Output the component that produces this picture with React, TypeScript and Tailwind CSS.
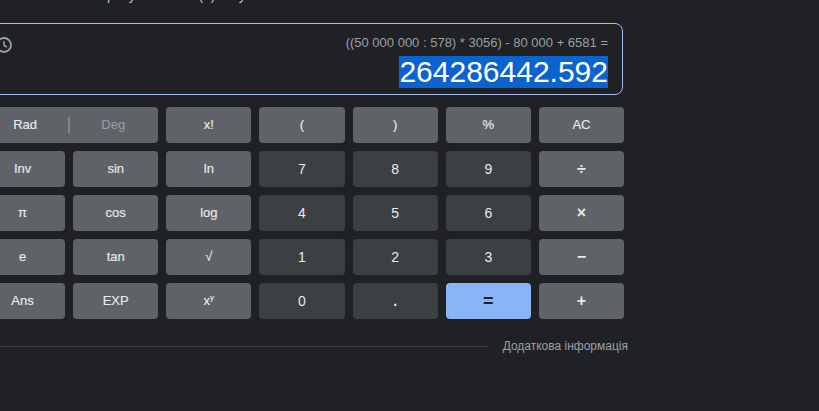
const sans = "font-['Liberation_Sans',Arial,sans-serif]";

type Key = { label: React.ReactNode; kind?: "fn" | "num" | "eq" | "op" };

const rows: Key[][] = [
  [
    { label: "x!" },
    { label: "(" },
    { label: ")" },
    { label: "%" },
    { label: "AC" },
  ],
  [
    { label: "Inv" },
    { label: "sin" },
    { label: "ln" },
    { label: "7", kind: "num" },
    { label: "8", kind: "num" },
    { label: "9", kind: "num" },
    { label: "÷", kind: "op" },
  ],
  [
    { label: "π" },
    { label: "cos" },
    { label: "log" },
    { label: "4", kind: "num" },
    { label: "5", kind: "num" },
    { label: "6", kind: "num" },
    { label: "×", kind: "op" },
  ],
  [
    { label: "e" },
    { label: "tan" },
    { label: "√" },
    { label: "1", kind: "num" },
    { label: "2", kind: "num" },
    { label: "3", kind: "num" },
    { label: "−", kind: "op" },
  ],
  [
    { label: "Ans" },
    { label: "EXP" },
    {
      label: (
        <>
          x<sup className="top-[-5px] text-[8px]">y</sup>
        </>
      ),
    },
    { label: "0", kind: "num" },
    { label: ".", kind: "num" },
    { label: "=", kind: "eq" },
    { label: "+", kind: "op" },
  ],
];

function CalcKey({ k }: { k: Key }) {
  let tone = "bg-[#5f6368] pb-px text-[13px] text-[#e8eaed] [-webkit-text-stroke:0.15px_#e8eaed]";
  if (k.kind === "num") tone = "bg-[#3c4043] text-sm text-[#e8eaed]";
  if (k.kind === "op") tone = "bg-[#5f6368] text-base font-bold text-[#e8eaed]";
  if (k.kind === "eq") tone = "bg-[#8ab4f8] text-lg font-bold text-[#202124]";
  return (
    <div className={`flex h-9 items-center justify-center rounded ${tone} ${k.label === "." ? "font-bold" : ""}`}>
      <span>{k.label}</span>
    </div>
  );
}

function HistoryIcon() {
  return (
    <svg width="24" height="24" viewBox="0 0 24 24" fill="none" stroke="#9aa0a6" strokeWidth="1.8" className="shrink-0">
      <circle cx="12" cy="12" r="7" />
      <path d="M12 8v4.5l3 1.5" strokeWidth="1.5" />
    </svg>
  );
}

export default function App() {
  return (
    <div className={`h-[411px] w-[819px] overflow-hidden bg-[#202124] ${sans}`}>
      <div className="ml-[-20px] w-[644px]">
        <p className="mt-[-13px] h-3.5 pl-[127px] text-sm leading-[16px] whitespace-nowrap text-[#bdc1c6]">
          року та назва (а) на у
        </p>
        <div className="mt-[22px] mr-px flex h-[72px] justify-between rounded-lg border border-[#a8c0ec] pt-[10px] pr-[14px] pl-[11px]">
          <div className="-mt-[1px]">
            <HistoryIcon />
          </div>
          <div className="flex flex-col items-end">
            <span className="text-[13px] leading-[18px] text-[#9aa0a6]">
              ((50 000 000 : 578) * 3056) - 80 000 + 6581 =
            </span>
            <span className="mt-[4px] bg-[#0b63ce] text-[30px] leading-[32px] text-white">264286442.592</span>
          </div>
        </div>
        <div className="mt-3 grid grid-cols-7 gap-2">
          <div className="col-span-2 flex h-9 items-center rounded bg-[#5f6368] pb-px text-[13px]">
            <span className="flex-1 pl-0.5 text-center text-[#e8eaed] [-webkit-text-stroke:0.15px_#e8eaed]">Rad</span>
            <span className="h-4 w-0.5 bg-[#80868b]" />
            <span className="flex-1 pr-0.5 text-center text-[#9aa0a6]">Deg</span>
          </div>
          {rows.flat().map((k, i) => (
            <CalcKey key={i} k={k} />
          ))}
        </div>
        <div className="mt-[19px] flex items-center">
          <div className="h-px flex-1 bg-[#3c4043]" />
          <span className="mr-[-4px] ml-[14px] text-xs leading-4 text-[#9aa0a6]">Додаткова інформація</span>
        </div>
      </div>
    </div>
  );
}
